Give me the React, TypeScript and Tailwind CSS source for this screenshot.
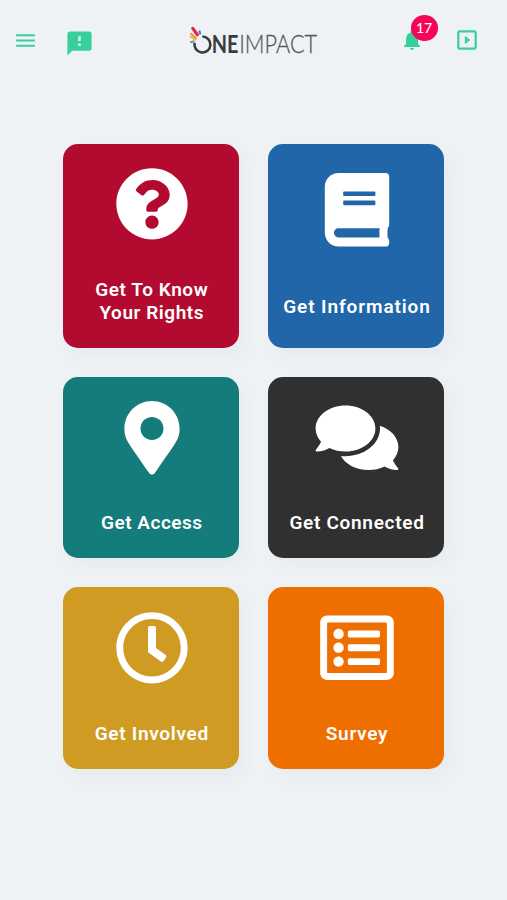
import type { IconType } from 'react-icons'
import { FaBook, FaComments, FaMapMarkerAlt, FaQuestionCircle, FaRegClock, FaRegListAlt } from 'react-icons/fa'
import { MdFeedback, MdMenu, MdNotifications, MdOutlineSlideshow } from 'react-icons/md'
import { clsx } from 'clsx'

interface Tile {
  lines: string[]
  icon: IconType
  color: string
  spacing: string
  tracking: string
}

const TILES: Tile[] = [
  { lines: ['Get To Know', 'Your Rights'], icon: FaQuestionCircle, color: 'bg-[#b30b30]', spacing: 'pt-[23px] pb-6', tracking: 'tracking-[0.55px]' },
  { lines: ['Get Information'], icon: FaBook, color: 'bg-[#2066a8]', spacing: 'pt-[29px] pb-[30px]', tracking: 'tracking-[0.9px]' },
  { lines: ['Get Access'], icon: FaMapMarkerAlt, color: 'bg-[#147c7b]', spacing: 'pt-6 pb-6', tracking: 'tracking-[0.5px]' },
  { lines: ['Get Connected'], icon: FaComments, color: 'bg-[#303030]', spacing: 'pt-6 pb-6', tracking: 'tracking-[0.7px]' },
  { lines: ['Get Involved'], icon: FaRegClock, color: 'bg-[#cf9b22]', spacing: 'pt-6 pb-6', tracking: 'tracking-[0.7px]' },
  { lines: ['Survey'], icon: FaRegListAlt, color: 'bg-[#ef6e00]', spacing: 'pt-6 pb-6', tracking: 'tracking-[0.7px]' },
]

function Logo() {
  return (
    <svg width="132" height="36" viewBox="0 0 132 36" className="font-['Lato',sans-serif]">
      {/* open ring of the O */}
      <path d="M13.4 10.5A8 8 0 1 1 5.6 16.8" fill="none" stroke="#3b3b3d" strokeWidth="2.6" />
      <g strokeLinecap="round" fill="none">
        <path d="M3.8 2.4l4.6 6.4" stroke="#e0264b" strokeWidth="3.2" />
        <path d="M2 7.8l5 4.4" stroke="#f08a3c" strokeWidth="2" />
        <path d="M1.6 10.6l4.6 3" stroke="#f5bd3c" strokeWidth="2" />
        <path d="M2 16l2.8 -0.5" stroke="#35a6c4" strokeWidth="2" />
        <path d="M10.6 5.2l0.5 2.6" stroke="#5575bb" strokeWidth="2" />
      </g>
      <g transform="translate(22.8 27.2) scale(0.82 1)">
        <text fontSize="25" fontWeight="700" fill="#3b3b3d" textLength="32.6" lengthAdjust="spacingAndGlyphs">
          NE
        </text>
      </g>
      <g transform="translate(50.2 27.2) scale(0.86 1)">
        <text fontSize="25" fontWeight="300" fill="#58585a" stroke="#58585a" strokeWidth="0.3" textLength="90.6" lengthAdjust="spacingAndGlyphs">
          IMPACT
        </text>
      </g>
    </svg>
  )
}

function Header() {
  return (
    <header className="flex h-20 items-start pl-[13px] pr-[27px] text-[#39cf9d]">
      <button className="mt-7">
        <MdMenu className="size-[25px]" />
      </button>
      <button className="ml-[27px] mt-[29px]">
        <MdFeedback className="size-[29px]" />
      </button>
      <div className="ml-[95px] mt-[26px]">
        <Logo />
      </div>
      <button className="relative ml-auto mt-7">
        <MdNotifications className="size-6" />
        <span className="absolute -top-[13px] left-[10.5px] flex h-[25.5px] w-[27px] items-center justify-center rounded-[50%] bg-[#f50458] font-['Lato',sans-serif] text-[14px] font-medium text-white">
          17
        </span>
      </button>
      <button className="ml-[30px] mt-[27px]">
        <MdOutlineSlideshow className="size-[26px]" />
      </button>
    </header>
  )
}

function MenuTile({ tile }: { tile: Tile }) {
  const Icon = tile.icon

  return (
    <a
      className={clsx(
        'flex flex-col items-center justify-between rounded-[15px] pl-px text-white shadow-[6px_8px_16px_rgba(60,70,90,0.04)]',
        tile.color,
        tile.spacing,
      )}
    >
      <Icon className="h-[73.6px] w-[84px]" />
      <span
        className={clsx(
          "text-center font-['Roboto',sans-serif] text-[19px] font-semibold leading-[23px] whitespace-nowrap",
          tile.tracking,
        )}
      >
        {tile.lines.map((line) => (
          <span key={line} className="block">
            {line}
          </span>
        ))}
      </span>
    </a>
  )
}

export default function App() {
  return (
    <div className="h-[900px] w-[507px] overflow-hidden bg-[#eef2f5]">
      <Header />
      <main className="mt-16 grid grid-cols-[176px_176px] grid-rows-[204px_181px_182px] gap-x-[29.2px] gap-y-[29px] pl-[63.3px]">
        {TILES.map((tile) => (
          <MenuTile key={tile.lines[0]} tile={tile} />
        ))}
      </main>
    </div>
  )
}
